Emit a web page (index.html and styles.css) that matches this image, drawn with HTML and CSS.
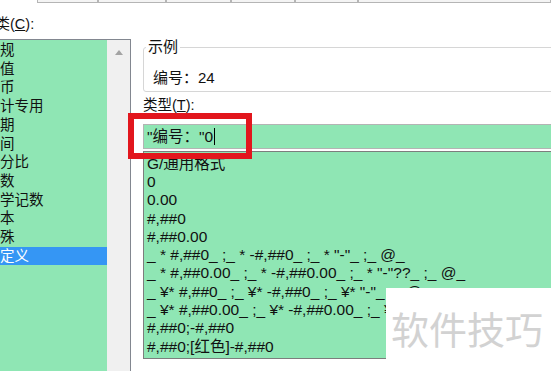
FILE: index.html
```html
<!DOCTYPE html>
<html>
<head>
    <meta charset="utf-8">
    <title>设置单元格格式</title>
    <link rel="stylesheet" href="styles.css">
</head>
<body>

<div class="tabs">
    <div class="tab t1"></div>
    <div class="tab t2"></div>
    <div class="tab t3"></div>
    <div class="tab t4"></div>
    <div class="tab t5"></div>
    <div class="tab t6"></div>
</div>

<div class="cols">
    <div class="left">
        <div class="catLabel">分类(<u>C</u>):</div>
        <div class="catBox">
            <ul class="catList">
                <li>常规</li>
                <li>数值</li>
                <li>货币</li>
                <li>会计专用</li>
                <li>日期</li>
                <li>时间</li>
                <li>百分比</li>
                <li>分数</li>
                <li>科学记数</li>
                <li>文本</li>
                <li>特殊</li>
                <li class="sel">自定义</li>
            </ul>
            <div class="scroll">
                <svg width="8" height="5" viewBox="0 0 8 5"><path d="M0 5 L4 0 L8 5 Z" fill="#a3a3a3"/></svg>
            </div>
        </div>
    </div>

    <div class="right">
        <fieldset class="sample">
            <legend>示例</legend>
            <p>编号：24</p>
        </fieldset>
        <div class="typeLabel">类型(<u>T</u>):</div>
        <div class="typeInput">"编号："0<span class="caret"></span></div>
        <ul class="typeList">
            <li>G/通用格式</li>
            <li>0</li>
            <li>0.00</li>
            <li>#,##0</li>
            <li>#,##0.00</li>
            <li>_ * #,##0_ ;_ * -#,##0_ ;_ * "-"_ ;_ @_</li>
            <li>_ * #,##0.00_ ;_ * -#,##0.00_ ;_ * "-"??_ ;_ @_</li>
            <li>_ ¥* #,##0_ ;_ ¥* -#,##0_ ;_ ¥* "-"_ ;_ @_</li>
            <li>_ ¥* #,##0.00_ ;_ ¥* -#,##0.00_ ;_ ¥* "-"??_ ;_ @_</li>
            <li>#,##0;-#,##0</li>
            <li>#,##0;[红色]-#,##0</li>
        </ul>
    </div>
</div>

<!-- 标注框 -->
<div class="mark"></div>
<!-- 水印 -->
<div class="water">软件技巧</div>

</body>
</html>
```

FILE: styles.css
```css
html,
body,
ul,
li,
p {
    margin: 0;
    padding: 0;
    border: 0;
    list-style: none;
}

body {
    width: 551px;
    height: 371px;
    overflow: hidden;
    position: relative;
    background: #fff;
    color: #111;
    font-family: "Liberation Sans", "Noto Sans CJK SC", sans-serif;
}

.tabs {
    height: 4px;
    padding-left: 37px;
    display: flex;
}

.tab {
    height: 2px;
    border: 1px solid #b5b5b5;
    border-top: 0;
    background: #f4f4f4;
}

.t1 { width: 62px; }
.t2 { width: 69px; }
.t3 { width: 66px; }
.t4 { width: 65px; }
.t5 { width: 64px; }
.t6 { width: 200px; }

.cols {
    display: flex;
}

.left {
    width: 131px;
    flex: none;
}

.catLabel {
    height: 35px;
    padding-top: 10px;
    box-sizing: border-box;
    line-height: 20px;
    font-size: 14.5px;
    margin-left: -19px;
    white-space: nowrap;
}

.catBox {
    height: 332px;
    display: flex;
    border-top: 1px solid #828790;
    border-right: 1px solid #828790;
    box-sizing: border-box;
}

.catList {
    width: 107px;
    background: #8fe6b4;
    padding-top: 1px;
    font-size: 14.5px;
    line-height: 18.7px;
    overflow: hidden;
    white-space: nowrap;
}

.catList li {
    text-indent: -1em;
}

.catList .sel {
    background: #3596f4;
    color: #fff;
}

.scroll {
    flex: 1;
    background: #f0f0f0;
    display: flex;
    justify-content: center;
    padding-top: 10px;
}

.scroll svg {
    display: block;
}

.right {
    flex: 1;
    padding-left: 12px;
    overflow: hidden;
}

.sample {
    margin: 34px -20px 0 0;
    padding: 0 9px 3px;
    border: 1px solid #d6d6d6;
    border-radius: 3px;
}

.sample legend {
    margin-left: -7px;
    padding: 0 2px;
    font-size: 15px;
    line-height: 18px;
}

.sample p {
    padding-top: 12px;
    font-size: 15px;
    line-height: 20px;
}

.typeLabel {
    margin-top: 4px;
    font-size: 14.5px;
    line-height: 18px;
}

.typeInput {
    margin: 10px -20px 0 0;
    height: 25px;
    box-sizing: border-box;
    border: 1px solid #b4b4b4;
    background: #8fe6b4;
    padding-left: 3px;
    font-size: 15.5px;
    line-height: 23px;
    white-space: nowrap;
}

.caret {
    display: inline-block;
    width: 0;
    height: 17px;
    border-left: 1px solid #000;
    vertical-align: -3px;
    margin-left: 1px;
}

.typeList {
    margin: 2px -20px 0 0;
    height: 208px;
    box-sizing: border-box;
    border: 1px solid #7d7d7d;
    background: #8fe6b4;
    padding: 2.7px 0 0 3px;
    font-size: 15.5px;
    line-height: 18.3px;
    white-space: nowrap;
    overflow: hidden;
}

.mark {
    position: absolute;
    left: 128px;
    top: 113px;
    width: 124px;
    height: 46px;
    box-sizing: border-box;
    border: 6px solid #e2161d;
}

.water {
    position: absolute;
    left: 386px;
    top: 288px;
    right: 0;
    bottom: 0;
    background: #fff;
    padding: 15px 0 0 5px;
    font-family: "Noto Sans CJK SC", sans-serif;
    font-size: 38px;
    line-height: 50px;
    color: #d2d2d2;
    white-space: nowrap;
}
```
